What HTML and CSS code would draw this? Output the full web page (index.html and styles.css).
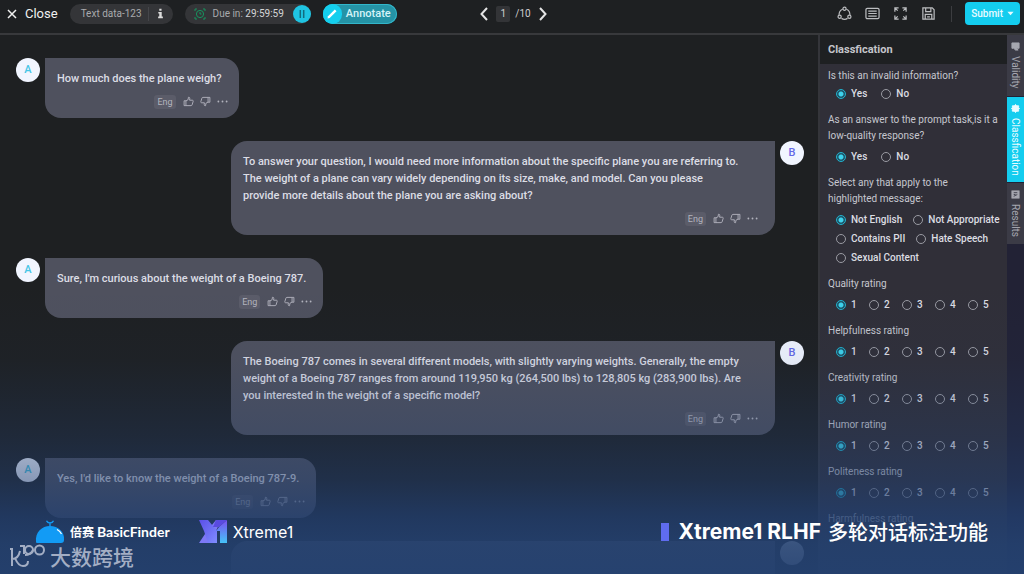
FILE: index.html
```html
<!DOCTYPE html>
<html lang="en">
<head>
<meta charset="utf-8">
<meta name="viewport" content="width=device-width, initial-scale=1">
<title>Xtreme1 RLHF</title>
<link rel="stylesheet" href="styles.css">
</head>
<body>
<svg class="defs" aria-hidden="true">
  <symbol id="up" viewBox="0 0 12 12"><path d="M1.2 5.2h2v5.3h-2zM3.2 5.4 5.6 4l.3-2.6c.9-.3 1.6.4 1.5 1.4L7.2 4.6h3c.8 0 1.1.6.9 1.2l-1.200 3.900c-.2.5-.5.8-1.100.8H3.200"/></symbol>
  <symbol id="down" viewBox="0 0 12 12"><path d="M10.800 6.800h-2V1.500h2zM8.800 6.600 6.400 8l-.3 2.600c-.9.300-1.600-.4-1.500-1.400l.2-1.800h-3c-.8 0-1.100-.6-.9-1.200l1.200-3.900c.2-.5.5-.8 1.100-.8h5.600"/></symbol>
  <symbol id="dots" viewBox="0 0 12 12"><g fill="currentColor" stroke="none"><circle cx="1.500" cy="6" r="1"/><circle cx="6" cy="6" r="1"/><circle cx="10.500" cy="6" r="1"/></g></symbol>
</svg>
<div class="app">
  <header class="topbar">
    <div class="group">
      <button class="close"><svg class="x" viewBox="0 0 10 10"><path d="M1 1l8 8M9 1 1 9"/></svg>Close</button>
      <div class="pill file"><span>Text data-123</span><button class="info" aria-label="Information"><svg viewBox="0 0 8 12"><path d="M2.600.5h2.600v2.300H2.600zM1.500 4.300h3.900v5.200h1.300v1.800H1.300V9.500h1.300V6.100H1.500z"/></svg></button></div>
      <div class="pill due">
        <svg class="clock" viewBox="0 0 12 12"><path d="M1 3V1h2M9 1h2v2M11 9v2H9M3 11H1V9"/><circle cx="6" cy="6" r="3.600"/><path d="M6 4v2h1.500"/></svg>
        <span>Due in: <b>29:59:59</b></span>
        <button class="pause" aria-label="Pause"><svg viewBox="0 0 10 10"><path d="M3.300 1v8M6.700 1v8"/></svg></button>
      </div>
      <button class="annotate"><span class="pen"><svg viewBox="0 0 12 12"><path d="M1.500 10.500l.5-2.200L8.800 1.500l1.700 1.700-6.800 6.800z"/></svg></span>Annotate</button>
    </div>
    <nav class="pager" aria-label="Items">
      <button aria-label="Previous"><svg viewBox="0 0 8 14"><path d="M7 1 1.500 7 7 13"/></svg></button>
      <span class="page">1</span><span class="total">/10</span>
      <button aria-label="Next"><svg viewBox="0 0 8 14"><path d="m1 1 5.500 6L1 13"/></svg></button>
    </nav>
    <div class="tools">
      <button aria-label="Relations"><svg viewBox="0 0 16 16"><circle cx="8" cy="3" r="1.700"/><circle cx="2.800" cy="11.500" r="1.700"/><circle cx="13.200" cy="11.500" r="1.700"/><path d="M6 3.500A6 6 0 0 0 2.300 9.500M10 3.500A6 6 0 0 1 13.700 9.500M4.800 13.200a6 6 0 0 0 6.400 0"/></svg></button>
      <button aria-label="Shortcuts"><svg viewBox="0 0 16 16"><rect x="1" y="2.500" width="14" height="11" rx="1.500"/><path d="M3.500 5.500h9M3.500 8h9M3.500 10.700h9"/></svg></button>
      <button aria-label="Full screen"><svg viewBox="0 0 16 16"><path d="M2 6V2h4M10 2h4v4M14 10v4h-4M6 14H2v-4M2 2l3 3M14 2l-3 3M14 14l-3-3M2 14l3-3"/></svg></button>
      <button aria-label="Save"><svg viewBox="0 0 16 16"><path d="M2 2h10l2 2v10H2zM5 2v4h5.500V2M4.500 14V9h7v5M6.500 11.500h3"/></svg></button>
      <span class="divider"></span>
      <button class="submit">Submit<svg viewBox="0 0 8 5"><path d="M.5.5h7L4 4.500z"/></svg></button>
    </div>
  </header>

  <div class="body">
    <main class="chat">
      <article class="msg a"><span class="avatar">A</span><div class="bubble"><p>How much does the plane weigh?</p><div class="acts"><span class="lang">Eng</span><button aria-label="Like"><svg><use href="#up"/></svg></button><button aria-label="Dislike"><svg><use href="#down"/></svg></button><button aria-label="More"><svg><use href="#dots"/></svg></button></div></div></article>
      <article class="msg b"><span class="avatar">B</span><div class="bubble"><p>To answer your question, I would need more information about the specific plane you are referring to.<br>The weight of a plane can vary widely depending on its size, make, and model. Can you please<br>provide more details about the plane you are asking about?</p><div class="acts"><span class="lang">Eng</span><button aria-label="Like"><svg><use href="#up"/></svg></button><button aria-label="Dislike"><svg><use href="#down"/></svg></button><button aria-label="More"><svg><use href="#dots"/></svg></button></div></div></article>
      <article class="msg a"><span class="avatar">A</span><div class="bubble"><p>Sure, I'm curious about the weight of a Boeing 787.</p><div class="acts"><span class="lang">Eng</span><button aria-label="Like"><svg><use href="#up"/></svg></button><button aria-label="Dislike"><svg><use href="#down"/></svg></button><button aria-label="More"><svg><use href="#dots"/></svg></button></div></div></article>
      <article class="msg b"><span class="avatar">B</span><div class="bubble"><p>The Boeing 787 comes in several different models, with slightly varying weights. Generally, the empty<br>weight of a Boeing 787 ranges from around 119,950 kg (264,500 lbs) to 128,805 kg (283,900 lbs). Are<br>you interested in the weight of a specific model?</p><div class="acts"><span class="lang">Eng</span><button aria-label="Like"><svg><use href="#up"/></svg></button><button aria-label="Dislike"><svg><use href="#down"/></svg></button><button aria-label="More"><svg><use href="#dots"/></svg></button></div></div></article>
      <article class="msg a"><span class="avatar">A</span><div class="bubble"><p>Yes, I'd like to know the weight of a Boeing 787-9.</p><div class="acts"><span class="lang">Eng</span><button aria-label="Like"><svg><use href="#up"/></svg></button><button aria-label="Dislike"><svg><use href="#down"/></svg></button><button aria-label="More"><svg><use href="#dots"/></svg></button></div></div></article>
      <article class="msg b"><span class="avatar"></span><div class="bubble empty"></div></article>
    </main>

    <aside class="panel">
      <h2>Classfication</h2>
      <form class="form">
        <fieldset class="tight"><legend>Is this an invalid information?</legend><div class="opts">
          <label><input type="radio" name="q1" checked>Yes</label><label><input type="radio" name="q1">No</label></div></fieldset>
        <fieldset><legend>As an answer to the prompt task,is it a low-quality response?</legend><div class="opts">
          <label><input type="radio" name="q2" checked>Yes</label><label><input type="radio" name="q2">No</label></div></fieldset>
        <fieldset><legend>Select any that apply to the<br>highlighted message:</legend><div class="opts tags">
          <label><input type="radio" name="q3" checked>Not English</label><label><input type="radio" name="q3">Not Appropriate</label><label><input type="radio" name="q3">Contains PII</label><label><input type="radio" name="q3">Hate Speech</label><label><input type="radio" name="q3">Sexual Content</label></div></fieldset>
        <fieldset><legend>Quality rating</legend><div class="scale">
          <label><input type="radio" name="r1" checked>1</label><label><input type="radio" name="r1">2</label><label><input type="radio" name="r1">3</label><label><input type="radio" name="r1">4</label><label><input type="radio" name="r1">5</label></div></fieldset>
        <fieldset><legend>Helpfulness rating</legend><div class="scale">
          <label><input type="radio" name="r2" checked>1</label><label><input type="radio" name="r2">2</label><label><input type="radio" name="r2">3</label><label><input type="radio" name="r2">4</label><label><input type="radio" name="r2">5</label></div></fieldset>
        <fieldset><legend>Creativity rating</legend><div class="scale">
          <label><input type="radio" name="r3" checked>1</label><label><input type="radio" name="r3">2</label><label><input type="radio" name="r3">3</label><label><input type="radio" name="r3">4</label><label><input type="radio" name="r3">5</label></div></fieldset>
        <fieldset><legend>Humor rating</legend><div class="scale">
          <label><input type="radio" name="r4" checked>1</label><label><input type="radio" name="r4">2</label><label><input type="radio" name="r4">3</label><label><input type="radio" name="r4">4</label><label><input type="radio" name="r4">5</label></div></fieldset>
        <fieldset><legend>Politeness rating</legend><div class="scale">
          <label><input type="radio" name="r5" checked>1</label><label><input type="radio" name="r5">2</label><label><input type="radio" name="r5">3</label><label><input type="radio" name="r5">4</label><label><input type="radio" name="r5">5</label></div></fieldset>
        <fieldset><legend>Harmfulness rating</legend></fieldset>
      </form>
    </aside>

    <nav class="tabs" aria-label="Panels">
      <button><svg viewBox="0 0 10 10"><path fill="currentColor" d="M1 1h8v6H6l2 2H5L3 7H1z"/></svg>Validity</button>
      <button class="on"><svg viewBox="0 0 10 10"><path fill="currentColor" d="M5 .5 6.500 2h2v2l1 1-1 1v2h-2L5 9.500 3.500 8h-2V6l-1-1 1-1V2h2z"/></svg>Classfication</button>
      <button><svg viewBox="0 0 10 10"><rect x="1" y="1" width="8" height="8" fill="currentColor"/><path d="M3 3h4M3 5h2M3 7l4-2" stroke="#3b3b46"/></svg>Results</button>
    </nav>
  </div>

  <footer class="banner">
    <div class="brands">
      <div class="basic">
        <svg viewBox="0 0 30 24"><path fill="#129bf5" d="M1 22C0 12 7 6 15 6s15 6 14 14c0 2-1 3-3 3H3c-1 0-2 0-2-1z"/><path d="M15 6V3M15 3C13 3 12 2 11.500.8M15 3c2 0 3-1 3.500-2.200" stroke="#129bf5" stroke-width="1.400" fill="none"/><path d="M22 9.500q3 1.500 4.500 4.500" stroke="#fff" stroke-width="1.200" fill="none"/></svg>
        <span class="zh" lang="zh">倍赛</span><span class="en">BasicFinder</span>
      </div>
      <div class="xtreme">
        <svg viewBox="0 0 28 25"><defs><linearGradient id="g1" x1="0" y1="0" x2="1" y2="1"><stop offset="0" stop-color="#5b4fe8"/><stop offset="1" stop-color="#7f8cff"/></linearGradient><linearGradient id="g2" x1="0" y1="0" x2="0" y2="1"><stop offset="0" stop-color="#7a4ff0"/><stop offset="1" stop-color="#45c3f8"/></linearGradient></defs><path fill="#7d78f5" d="M0 24 8 12l9-11h5l-5 11-8 12z"/><path fill="url(#g1)" d="M0 1h9l9 11v12h-9L5 12z"/><path fill="#5a4be0" d="M17 1h11l-8 7h-6z"/><path fill="url(#g2)" d="M28 1v23h-7V12h-4l3-4z"/></svg>
        <span>Xtreme1</span>
      </div>
    </div>
    <h1><span class="latin">Xtreme1 RLHF</span><span lang="zh">多轮对话标注功能</span></h1>
    <div class="mark" lang="zh">
      <svg viewBox="0 0 36 24"><path d="M1 5h2v17M3 15c4 0 7-3 8-8M6 14c2 5 4 8 8 8 3 0 5-2 5-5M11 2h4v8"/><circle cx="20" cy="6" r="4"/><circle cx="30.500" cy="6" r="4.500"/><path d="M24 6c-2 4-4 5-8 5"/></svg>
      <span>大数跨境</span>
    </div>
  </footer>
</div>
</body>
</html>
```
FILE: styles.css
```css
* { box-sizing: border-box; }
body { margin: 0; background: #1e2022; color: #d6d7dc; font: 10px/16px Roboto, "Noto Sans", sans-serif; }
button { padding: 0; border: 0; background: none; color: inherit; font: inherit; display: flex; align-items: center; cursor: pointer; }
svg { display: block; fill: none; stroke: currentColor; flex: none; }
.defs { position: absolute; width: 0; height: 0; }
.app { position: relative; display: flex; flex-direction: column; height: 100vh; overflow: hidden; }

/* top bar */
.topbar { display: grid; grid-template-columns: 1fr auto 1fr; align-items: center; padding: 2px 4px 8px 7px; border-bottom: 2px solid #38393c; flex: none; }
.group { display: flex; align-items: center; }
.close { gap: 8px; font-size: 13px; color: #f0f0f0; margin-right: 12px; }
.x { width: 10px; height: 10px; stroke-width: 1.5; }
.pill { display: flex; align-items: center; height: 20px; border-radius: 10px; background: #343538; color: #a9aaad; }
.file { padding-left: 11px; margin-right: 12px; }
.info { width: 25px; height: 14px; margin-left: 6px; border-left: 1px solid #45464a; justify-content: center; color: #ddd; }
.info svg { width: 7px; height: 11px; fill: currentColor; stroke: none; }
.due { padding-left: 9px; margin-right: 12px; }
.due span { margin: 0 9px 0 7px; }
.due b { font-weight: 400; color: #d5d5d7; }
.clock { width: 12px; height: 12px; color: #16945f; }
.pause { width: 18px; height: 18px; border-radius: 50%; background: #1fc4e2; color: #126c7e; justify-content: center; }
.pause svg { width: 10px; height: 10px; stroke-width: 1.5; }
.annotate { height: 20px; padding-right: 6px; gap: 4px; border-radius: 10px; background: #2593a6; box-shadow: inset 0 0 0 1px #32b6ca; color: #d5f3f8; font-size: 11px; font-weight: 500; }
.pen { display: grid; place-items: center; width: 19px; height: 20px; border-radius: 10px; background: #14cfee; color: #fff; }
.pen svg { width: 12px; height: 12px; fill: currentColor; stroke: none; }
.pager { display: flex; align-items: center; color: #cfcfd1; }
.pager svg { width: 8px; height: 14px; stroke-width: 2; color: #e4e4e4; }
.page { width: 14px; margin: 0 5px 0 8px; text-align: center; background: #333437; border-radius: 2px; }
.total { margin-right: 8px; }
.tools { display: flex; align-items: center; justify-content: flex-end; gap: 13px; color: #bcbdc0; }
.tools svg { width: 15px; height: 15px; stroke-width: 1.3; }
.divider { width: 1px; height: 16px; margin-left: 2px; background: #3c3d40; }
.tools .submit { height: 23px; padding: 0 6px; gap: 4px; border-radius: 4px; background: #14cdef; color: #e8fbff; font-weight: 500; }
.tools .submit svg { width: 7px; height: 5px; fill: currentColor; stroke: none; }

/* conversation */
.body { display: grid; grid-template-columns: minmax(0, 1fr) 189px 17px; flex: 1; min-height: 0; }
.chat { display: flex; flex-direction: column; gap: 23px; padding: 23px 14px 0 16px; overflow: hidden; }
.msg { display: flex; align-items: flex-start; gap: 5px; flex: none; }
.b { flex-direction: row-reverse; }
.avatar { display: grid; place-items: center; width: 24px; height: 24px; border-radius: 50%; background: #f1f5ff; color: #45c6e6; font-size: 11px; font-weight: 500; flex: none; }
.b .avatar { color: #6468e8; }
.bubble { max-width: 544px; padding: 12px 17px 8px 12px; border-radius: 0 16px 16px 16px; background: #4f515e; color: #dcdde5; }
.b .bubble { width: 544px; border-radius: 16px 0 16px 16px; }
.bubble p { margin: 0 0 6px; font-size: 11px; font-weight: 500; line-height: 17px; }
.b .empty { height: 94px; }
.acts { display: flex; align-items: center; justify-content: flex-end; gap: 6px; height: 17px; color: #b3b4be; }
.a .acts { margin-right: -6px; }
.acts svg { width: 11px; height: 11px; stroke-width: 1; }
.lang { padding: 0 3px; margin-right: 1px; border-radius: 3px; background: #5b5c69; font-size: 9px; line-height: 14px; }

/* classification panel */
.panel { border-left: 2px solid #34353a; background: #302f38; overflow: hidden; }
.panel h2 { margin: 0; padding: 6px 8px 5px; background: #1e2022; font-size: 11px; font-weight: 700; line-height: 18px; color: #c4c5ca; }
.form { padding: 4px 4px 0 8px; }
fieldset { margin: 0 0 9px; padding: 0; border: 0; min-width: 0; }
legend { padding: 0; margin: 0 0 4px; color: #c6c7cf; }
.tight legend { margin: 0 0 1px; }
.opts, .scale { display: flex; padding-left: 8px; }
.opts { gap: 1px 14px; flex-wrap: wrap; }
.tags { column-gap: 11px; }
.scale label { width: 33px; }
label { display: flex; align-items: center; gap: 5px; height: 18px; color: #dcdde2; font-weight: 500; white-space: nowrap; }
input { appearance: none; width: 10px; height: 10px; margin: 0; border: 1px solid #9a9ba3; border-radius: 50%; }
input:checked { border-color: #21b3cf; background: radial-gradient(circle, #3fd3ec 0 2px, #1d5265 3px); }

/* vertical tabs */
.tabs { display: flex; flex-direction: column; gap: 1px; background: #222235; }
.tabs button { writing-mode: vertical-rl; width: 17px; gap: 5px; padding: 7px 0; background: #3b3b46; color: #a6a7b0; line-height: 17px; }
.tabs .on { background: #14cdef; color: #eafcff; }
.tabs svg { width: 9px; height: 9px; }

/* title banner laid over the lower part of the workspace */
.banner { position: absolute; inset: 50% 0 0 0; display: grid; grid-template-columns: 1fr auto; align-content: end; align-items: center; padding: 0 36px 6px 9px; color: #fff; background: linear-gradient(rgba(34, 63, 112, 0), rgba(34, 63, 112, .06) 25%, rgba(34, 63, 112, .3) 52%, rgba(34, 63, 112, .5) 67%, rgba(34, 63, 112, .78) 80%, rgba(36, 65, 112, .9) 90%, rgba(36, 65, 112, .95)); }
.brands { display: flex; align-items: center; gap: 29px; padding-left: 26px; }
.basic, .xtreme, .mark, h1 { display: flex; align-items: center; }
.basic svg { width: 30px; height: 24px; stroke: none; margin-right: 5px; }
.zh { font: 700 12px/20px "Noto Sans CJK SC", sans-serif; margin-right: 3px; }
.en { font: 700 14px/20px Lato, sans-serif; }
.xtreme { gap: 6px; font: 400 16px/24px Inter, sans-serif; }
.xtreme svg { width: 28px; height: 25px; stroke: none; }
h1 { margin: 0; gap: 7px; font: 500 20px/24px "Noto Sans CJK SC", sans-serif; }
h1::before { content: ""; width: 8px; height: 18px; margin-right: 3px; background: #5f6cf0; }
.latin { font: 700 21px/24px Inter, sans-serif; }
.mark { gap: 5px; color: #a3aec4; font: 500 21px/24px "Noto Sans CJK SC", sans-serif; }
.mark svg { width: 36px; height: 24px; stroke-width: 2; }
```
